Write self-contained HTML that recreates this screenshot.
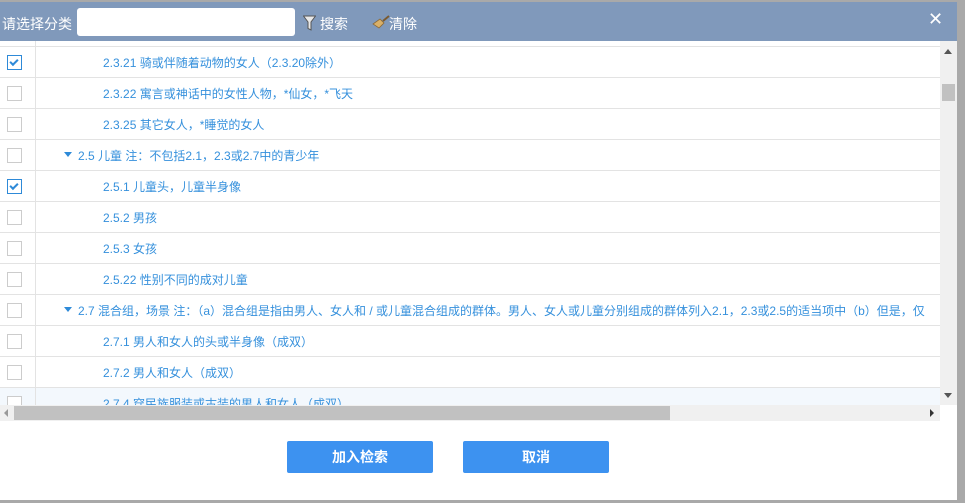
<html><head><style>
body{margin:0;width:965px;height:503px;background:#a9a9a9;position:relative;overflow:hidden;font-family:"Liberation Sans","Noto Sans CJK SC",sans-serif;}
.dlg{position:absolute;left:0;top:2px;width:957px;height:498px;background:#fff;}
.hd{position:absolute;left:0;top:0;width:957px;height:39px;background:#8099bb;color:#fff;font-size:14px;}
.grid{position:absolute;left:0;top:39px;width:940px;height:364px;overflow:hidden;}
.row{position:absolute;left:0;width:940px;height:30px;border-bottom:1px solid #e3e3e3;font-size:12px;color:#3590dc;white-space:nowrap;}
.cb{position:absolute;left:7px;top:8px;width:13px;height:13px;border:1px solid #ccc;background:#fff;}
.cb.on{border-color:#2e8ad8;}
.cb.on:after{content:"";position:absolute;width:6px;height:3px;border-left:2px solid #2e8ad8;border-bottom:2px solid #2e8ad8;transform:rotate(-45deg);top:3px;left:2px;}
.vl{position:absolute;left:35px;top:0;width:1px;height:364px;background:#e3e3e3;}
.t{position:absolute;top:7px;}
.tri{position:absolute;left:64px;top:12px;border-left:4px solid transparent;border-right:4px solid transparent;border-top:5px solid #2e8ad8;}
.btn{position:absolute;top:439px;width:146px;height:32px;background:#3d92f0;color:#fff;font-size:14px;font-weight:bold;text-align:center;line-height:32px;border-radius:2px;}
</style></head><body>
<div class="dlg">
<div class="hd">
<span style="position:absolute;left:2px;top:12px;">请选择分类</span>
<div style="position:absolute;left:77px;top:6px;width:218px;height:28px;background:#fff;border-radius:3px;"></div>
<svg style="position:absolute;left:303px;top:13px" width="13" height="16" viewBox="0 0 13 16"><path d="M0.5 1h12l-4.5 6v8l-3-1.5v-6.5z" fill="#e8e8e8" stroke="#555" stroke-width="1"/></svg>
<span style="position:absolute;left:320px;top:12px;">搜索</span>
<svg style="position:absolute;left:372px;top:13px" width="18" height="14" viewBox="0 0 18 14"><path d="M11 6l6-5" stroke="#7a5a30" stroke-width="2"/><path d="M1 9l7-5 4 4-5 5z" fill="#d9b068" stroke="#8a6a3a" stroke-width="0.8"/></svg>
<span style="position:absolute;left:389px;top:12px;">清除</span>
<span style="position:absolute;left:928px;top:7px;font-size:18px;">✕</span>
</div>
<div class="grid">
<div class="row" style="top:-25px"></div>
<div class="row" style="top:6px"><div class="cb on"></div><span class="t" style="left:103px">2.3.21 骑或伴随着动物的女人（2.3.20除外）</span></div>
<div class="row" style="top:37px"><div class="cb"></div><span class="t" style="left:103px">2.3.22 寓言或神话中的女性人物，*仙女，*飞天</span></div>
<div class="row" style="top:68px"><div class="cb"></div><span class="t" style="left:103px">2.3.25 其它女人，*睡觉的女人</span></div>
<div class="row" style="top:99px"><div class="cb"></div><div class="tri"></div><span class="t" style="left:78px">2.5 儿童 注：不包括2.1，2.3或2.7中的青少年</span></div>
<div class="row" style="top:130px"><div class="cb on"></div><span class="t" style="left:103px">2.5.1 儿童头，儿童半身像</span></div>
<div class="row" style="top:161px"><div class="cb"></div><span class="t" style="left:103px">2.5.2 男孩</span></div>
<div class="row" style="top:192px"><div class="cb"></div><span class="t" style="left:103px">2.5.3 女孩</span></div>
<div class="row" style="top:223px"><div class="cb"></div><span class="t" style="left:103px">2.5.22 性别不同的成对儿童</span></div>
<div class="row" style="top:254px"><div class="cb"></div><div class="tri"></div><span class="t" style="left:78px">2.7 混合组，场景 注：（a）混合组是指由男人、女人和 / 或儿童混合组成的群体。男人、女人或儿童分别组成的群体列入2.1，2.3或2.5的适当项中（b）但是，仅</span></div>
<div class="row" style="top:285px"><div class="cb"></div><span class="t" style="left:103px">2.7.1 男人和女人的头或半身像（成双）</span></div>
<div class="row" style="top:316px"><div class="cb"></div><span class="t" style="left:103px">2.7.2 男人和女人（成双）</span></div>
<div class="row" style="top:347px;background:#f3f8fd"><div class="cb"></div><span class="t" style="left:103px">2.7.4 穿民族服装或古装的男人和女人（成双）</span></div>
<div class="vl"></div>
</div>
<div style="position:absolute;left:940px;top:39px;width:17px;height:364px;background:#f0f0f0;">
<div style="position:absolute;left:4px;top:8px;border-left:4px solid transparent;border-right:4px solid transparent;border-bottom:5px solid #555;"></div>
<div style="position:absolute;left:2px;top:43px;width:13px;height:17px;background:#c1c1c1;"></div>
<div style="position:absolute;left:4px;top:352px;border-left:4px solid transparent;border-right:4px solid transparent;border-top:5px solid #555;"></div>
</div>
<div style="position:absolute;left:0;top:403px;width:940px;height:16px;background:#f0f0f0;">
<div style="position:absolute;left:14px;top:1px;width:656px;height:14px;background:#c1c1c1;"></div>
<div style="position:absolute;left:4px;top:4px;border-top:4px solid transparent;border-bottom:4px solid transparent;border-right:4px solid #999;"></div>
<div style="position:absolute;left:930px;top:4px;border-top:4px solid transparent;border-bottom:4px solid transparent;border-left:4px solid #333;"></div>
</div>
<div class="btn" style="left:287px">加入检索</div>
<div class="btn" style="left:463px">取消</div>
</div>
</body></html>
